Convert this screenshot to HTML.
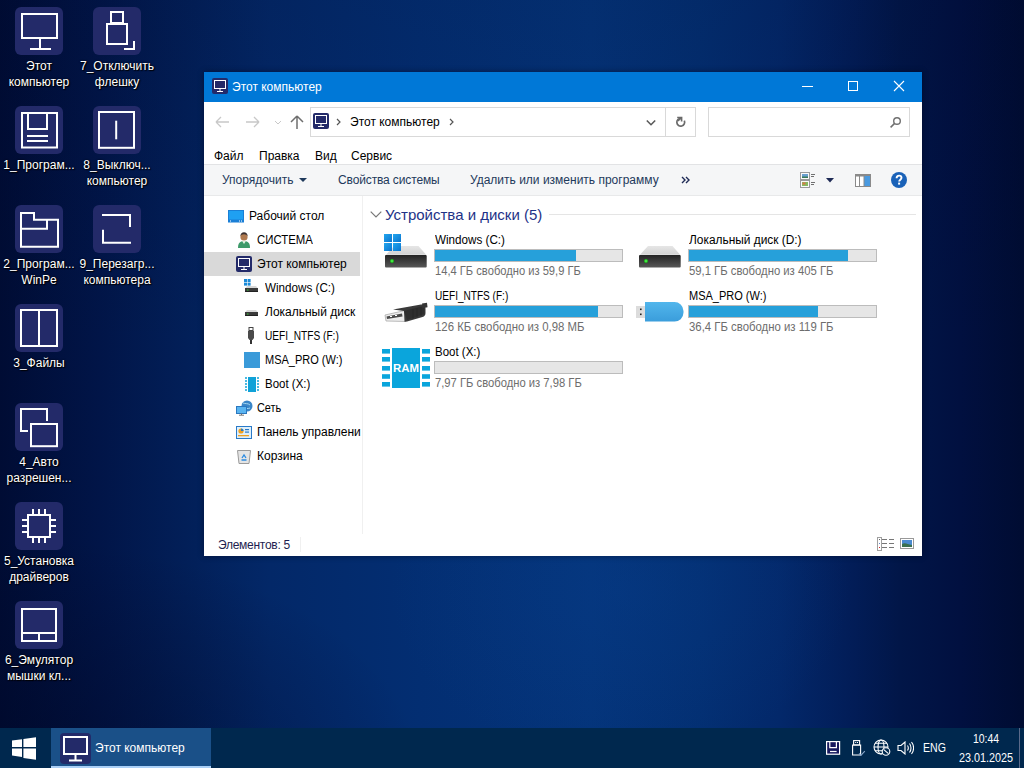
<!DOCTYPE html>
<html><head><meta charset="utf-8">
<style>
*{margin:0;padding:0;box-sizing:border-box}
html,body{width:1024px;height:768px;overflow:hidden}
body{position:relative;font-family:"Liberation Sans",sans-serif;
background:
 radial-gradient(ellipse 230px 170px at 620px 590px, rgba(8,62,140,0.35) 0%, rgba(8,62,140,0) 100%),
 radial-gradient(ellipse 420px 230px at 0px 768px, rgba(0,8,40,0.6) 0%, rgba(0,8,40,0) 100%),
 linear-gradient(180deg, rgba(0,8,40,0.12) 0px, rgba(0,8,40,0) 350px),
 linear-gradient(90deg,#000c34 0px,#011548 100px,#021f58 185px,#032868 270px,#032e72 420px,#04347a 590px,#032f72 700px,#03286a 780px,#021d58 850px,#011648 900px,#011040 960px,#000c32 1024px);
 background-color:#041c55;
}
.abs{position:absolute}
/* desktop icons */
.di{position:absolute;width:78px;text-align:center;color:#fff;font-size:12px;line-height:16px;text-shadow:0 0 2px #000,1px 1px 1px #000}
.di .ic{position:absolute;left:15px;top:0;width:48px;height:48px;border-radius:6px;background:#232a69}
.di .ic svg{position:absolute;left:0;top:0}
.di .lb{position:absolute;left:0;top:51px;width:78px}
/* window */
#win{position:absolute;left:204px;top:72px;width:718px;height:484px;background:#fff;box-shadow:0 0 6px rgba(0,0,20,0.45)}
#title{position:absolute;left:0;top:0;width:718px;height:30px;background:#0078d7;color:#fff;font-size:12px}
.t{position:absolute;white-space:nowrap;font-size:12px;line-height:14px}
#taskbar{position:absolute;left:0;top:728px;width:1024px;height:40px;background:#00284e}
</style></head><body>

<!-- desktop icons -->
<div class="di" style="left:0;top:7px"><div class="ic"><svg width="48" height="48" viewBox="0 0 48 48"><rect x="7" y="7" width="35" height="24" stroke="#fff" stroke-width="2" fill="none"/><path d="M25 31v10M15 42h21" stroke="#fff" stroke-width="2" fill="none"/></svg></div><div class="lb">Этот<br>компьютер</div></div>
<div class="di" style="left:78px;top:7px"><div class="ic"><svg width="48" height="48" viewBox="0 0 48 48"><rect x="18" y="5" width="12" height="11" stroke="#fff" stroke-width="2" fill="none"/><rect x="14" y="17" width="20" height="20" stroke="#fff" stroke-width="2" fill="none"/><path d="M41 34v8H31" stroke="#fff" stroke-width="2" fill="none"/></svg></div><div class="lb">7_Отключить<br>флешку</div></div>
<div class="di" style="left:0;top:106px"><div class="ic"><svg width="48" height="48" viewBox="0 0 48 48"><rect x="7" y="7" width="35" height="34.5" stroke="#fff" stroke-width="2" fill="none"/><path d="M13 7v16h19V7" stroke="#fff" stroke-width="2" fill="none"/><path d="M12 30h21M12 35h21" stroke="#fff" stroke-width="2" fill="none"/></svg></div><div class="lb">1_Програм...</div></div>
<div class="di" style="left:78px;top:106px"><div class="ic"><svg width="48" height="48" viewBox="0 0 48 48"><rect x="6" y="6" width="35" height="35.8" stroke="#fff" stroke-width="2" fill="none"/><path d="M23.2 14.7v18.6" stroke="#fff" stroke-width="2" fill="none"/></svg></div><div class="lb">8_Выключ...<br>компьютер</div></div>
<div class="di" style="left:0;top:205px"><div class="ic"><svg width="48" height="48" viewBox="0 0 48 48"><path d="M6 8h13v6.75h24v27.05H6z" stroke="#fff" stroke-width="2" fill="none"/><path d="M6 23.7h26v-8.95" stroke="#fff" stroke-width="2" fill="none"/></svg></div><div class="lb">2_Програм...<br>WinPe</div></div>
<div class="di" style="left:78px;top:205px"><div class="ic"><svg width="48" height="48" viewBox="0 0 48 48"><path d="M9 10h28v12M10 24.7V37.8h28" stroke="#fff" stroke-width="2" fill="none"/></svg></div><div class="lb">9_Перезагр...<br>компьютера</div></div>
<div class="di" style="left:0;top:304px"><div class="ic"><svg width="48" height="48" viewBox="0 0 48 48"><rect x="6" y="6" width="36" height="36" stroke="#fff" stroke-width="2" fill="none"/><path d="M24 6v36" stroke="#fff" stroke-width="2" fill="none"/></svg></div><div class="lb">3_Файлы</div></div>
<div class="di" style="left:0;top:403px"><div class="ic"><svg width="48" height="48" viewBox="0 0 48 48"><path d="M13 28H6V6h26v12" stroke="#fff" stroke-width="2" fill="none"/><rect x="16" y="21" width="26" height="22.2" stroke="#fff" stroke-width="2" fill="none"/></svg></div><div class="lb">4_Авто<br>разрешен...</div></div>
<div class="di" style="left:0;top:502px"><div class="ic"><svg width="48" height="48" viewBox="0 0 48 48"><rect x="13" y="13" width="22" height="22" stroke="#fff" stroke-width="2" fill="none"/><path d="M18 7v5M24 7v5M30 7v5M18 36v5M24 36v5M30 36v5M7 18h5M7 24h5M7 30h5M36 18h5M36 24h5M36 30h5" stroke="#fff" stroke-width="2" fill="none"/></svg></div><div class="lb">5_Установка<br>драйверов</div></div>
<div class="di" style="left:0;top:601px"><div class="ic"><svg width="48" height="48" viewBox="0 0 48 48"><rect x="7" y="8" width="34" height="32" stroke="#fff" stroke-width="2" fill="none"/><path d="M7 32h34M24 32v8" stroke="#fff" stroke-width="2" fill="none"/></svg></div><div class="lb">6_Эмулятор<br>мышки кл...</div></div>

<div id="win">
 <div id="title">
  <svg class="abs" style="left:8px;top:6px" width="16" height="16" viewBox="0 0 16 16"><rect x="0" y="0" width="16" height="16" rx="2" fill="#232a69"/><rect x="2.5" y="2.5" width="11" height="8" fill="none" stroke="#fff" stroke-width="1"/><path d="M8 11v2.5M5 13.5h6" stroke="#fff" stroke-width="1"/></svg>
  <div class="t" style="left:28px;top:8px;color:#fff">Этот компьютер</div>
  <div class="abs" style="left:598px;top:14px;width:11px;height:1px;background:#fff"></div>
  <div class="abs" style="left:644px;top:9px;width:10px;height:10px;border:1px solid #fff"></div>
  <svg class="abs" style="left:689px;top:8px" width="12" height="12" viewBox="0 0 12 12"><path d="M1 1L11 11M11 1L1 11" stroke="#fff" stroke-width="1.1"/></svg>
 </div>
 <!-- nav buttons -->
 <svg class="abs" style="left:10px;top:42px" width="100" height="16" viewBox="0 0 100 16">
  <path d="M2 8h13M2 8l5-5M2 8l5 5" stroke="#c8c8c8" stroke-width="1.3" fill="none"/>
  <path d="M32 8h13M45 8l-5-5M45 8l-5 5" stroke="#c8c8c8" stroke-width="1.3" fill="none"/>
  <path d="M61 7l3 3 3-3" stroke="#c8c8c8" stroke-width="1" fill="none"/>
  <path d="M83 15V2M83 2l-6 6M83 2l6 6" stroke="#6f6f6f" stroke-width="1.5" fill="none"/>
 </svg>
 <div class="abs" style="left:106px;top:35px;width:386px;height:30px;border:1px solid #d9d9d9"></div>
 <div class="abs" style="left:461px;top:36px;width:1px;height:28px;background:#d9d9d9"></div>
 <svg class="abs" style="left:109px;top:41px" width="16" height="16" viewBox="0 0 16 16"><rect x="0" y="0" width="16" height="16" rx="2" fill="#232a69"/><rect x="2.5" y="2.5" width="11" height="8" fill="none" stroke="#fff" stroke-width="1"/><path d="M8 11v2.5M5 13.5h6" stroke="#fff" stroke-width="1"/></svg>
 <svg class="abs" style="left:131px;top:45px" width="8" height="10" viewBox="0 0 8 10"><path d="M2 2l3 3-3 3" stroke="#555" stroke-width="1.2" fill="none"/></svg>
 <div class="t" style="left:146px;top:43px;color:#000">Этот компьютер</div>
 <svg class="abs" style="left:244px;top:45px" width="8" height="10" viewBox="0 0 8 10"><path d="M2 2l3 3-3 3" stroke="#555" stroke-width="1.2" fill="none"/></svg>
 <svg class="abs" style="left:441px;top:47px" width="12" height="8" viewBox="0 0 12 8"><path d="M1.8 1.5l4.2 4.2 4.2-4.2" stroke="#5a5a5a" stroke-width="1.6" fill="none"/></svg>
 <svg class="abs" style="left:470px;top:42px" width="14" height="16" viewBox="0 0 14 16"><path d="M10.3 6.6A3.9 3.9 0 1 1 6.9 4.3" stroke="#6a6a6a" stroke-width="1.7" fill="none"/><path d="M3.2 3.5H7.6V7.6" stroke="#6a6a6a" stroke-width="1.6" fill="none"/><path d="M4 7L7.4 3.7" stroke="#6a6a6a" stroke-width="1.3"/></svg>
 <div class="abs" style="left:504px;top:35px;width:202px;height:30px;border:1px solid #d9d9d9"></div>
 <svg class="abs" style="left:684px;top:42px" width="16" height="16" viewBox="0 0 16 16"><circle cx="9" cy="7" r="3.3" stroke="#707070" stroke-width="1.4" fill="none"/><path d="M6.6 9.4L2.6 13.4" stroke="#707070" stroke-width="1.5"/></svg>
 <!-- menu -->
 <div class="t" style="left:10px;top:77px;color:#000">Файл</div>
 <div class="t" style="left:55px;top:77px;color:#000">Правка</div>
 <div class="t" style="left:111px;top:77px;color:#000">Вид</div>
 <div class="t" style="left:147px;top:77px;color:#000">Сервис</div>
 <!-- toolbar -->
 <div class="abs" style="left:0;top:92px;width:718px;height:32px;background:#f5f6f7;border-top:1px solid #e2e3e5;border-bottom:1px solid #e8e9ea"></div>
 <div class="t" style="left:18px;top:101px;color:#1e395b">Упорядочить</div>
 <svg class="abs" style="left:95px;top:106px" width="9" height="5" viewBox="0 0 9 5"><path d="M0 0h8L4 4z" fill="#1e395b"/></svg>
 <div class="t" style="left:134px;top:101px;color:#1e395b;letter-spacing:-0.13px">Свойства системы</div>
 <div class="t" style="left:266px;top:101px;color:#1e395b">Удалить или изменить программу</div>
 <svg class="abs" style="left:477px;top:104px" width="10" height="8" viewBox="0 0 10 8"><path d="M1 1l3 3-3 3M5 1l3 3-3 3" stroke="#1e2a55" stroke-width="1.4" fill="none"/></svg>
 <svg class="abs" style="left:596px;top:100px" width="16" height="16" viewBox="0 0 16 16">
  <rect x="0.5" y="0.5" width="9" height="7" fill="#fafafa" stroke="#9a9a9a"/><rect x="0.5" y="8.5" width="9" height="7" fill="#fafafa" stroke="#9a9a9a"/>
  <rect x="2" y="2" width="6" height="4" fill="#6aa0d0"/><rect x="2" y="4.5" width="6" height="1.5" fill="#3a7a58"/>
  <rect x="2" y="10" width="6" height="4" fill="#88b860"/><rect x="2.5" y="10.5" width="3" height="2" fill="#d87848"/>
  <path d="M11 2.5h4M11 4.5h3M11 10.5h4M11 12.5h3" stroke="#707070" stroke-width="1"/>
 </svg>
 <svg class="abs" style="left:622px;top:106px" width="8" height="5" viewBox="0 0 8 5"><path d="M0 0h8L4 4.5z" fill="#1e2a55"/></svg>
 <svg class="abs" style="left:651px;top:102px" width="16" height="13" viewBox="0 0 16 13">
  <rect x="0.5" y="0.5" width="15" height="12" fill="#fff" stroke="#8a8a8a"/>
  <rect x="1" y="1" width="14" height="1.5" fill="#8a8a8a"/>
  <rect x="9" y="2" width="6" height="10" fill="#4a9ae0"/>
  <path d="M4.5 2v10M9 2v10" stroke="#8a8a8a" stroke-width="1"/>
 </svg>
 <svg class="abs" style="left:687px;top:100px" width="16" height="16" viewBox="0 0 16 16">
  <circle cx="8" cy="8" r="8" fill="#1a62b8"/>
  <path d="M5.6 6.2c0-1.6 1.1-2.6 2.5-2.6s2.4 0.9 2.4 2.2c0 1.9-2.3 1.9-2.3 3.8" stroke="#fff" stroke-width="1.9" fill="none"/>
  <rect x="7.1" y="10.6" width="2" height="2" fill="#fff"/>
 </svg>
 <!--NAV-->
 <div class="abs" style="left:0;top:180px;width:156px;height:24px;background:#d9d9d9"></div>
 <div class="abs" style="left:158px;top:124px;width:1px;height:338px;background:#f0f0f0"></div><div class="abs" style="left:96px;top:465px;width:1px;height:15px;background:#f0f0f0"></div>
 <svg class="abs" style="left:24px;top:138px" width="16" height="13" viewBox="0 0 16 13"><rect x="0.5" y="0.5" width="15" height="11.5" fill="#1fa0f2" stroke="#1a7fd6"/><rect x="0.5" y="9.5" width="15" height="2.5" fill="#1a7fd6"/><rect x="2" y="10.5" width="1" height="1" fill="#fff"/><rect x="11" y="10.5" width="1" height="1" fill="#fff"/><rect x="13" y="10.5" width="1" height="1" fill="#fff"/></svg>
 <div class="t" style="left:45px;top:137px;color:#000;">Рабочий стол</div>
 <svg class="abs" style="left:33px;top:159px" width="14" height="18" viewBox="0 0 14 18"><path d="M1 17c0-5 2-7 6-7s6 2 6 7z" fill="#3d9a6a"/><path d="M5 10l2 3 2-3z" fill="#e0f0e0"/><circle cx="7" cy="6" r="3.6" fill="#b07a50"/><path d="M3.3 5.5C3.5 2.5 5 1.2 7 1.2s3.6 1.3 3.7 4.3C10 4 9 3.2 7 3.2S4 4 3.3 5.5z" fill="#3a3030"/></svg>
 <div class="t" style="left:53px;top:161px;color:#000;transform:scaleX(0.949);transform-origin:0 0">СИСТЕМА</div>
 <svg class="abs" style="left:32px;top:184px" width="16" height="16" viewBox="0 0 16 16"><rect x="0" y="0" width="16" height="16" rx="2" fill="#232a69"/><rect x="2.5" y="2.5" width="11" height="8" fill="none" stroke="#fff" stroke-width="1"/><path d="M8 11v2.5M5 13.5h6" stroke="#fff" stroke-width="1"/></svg>
 <div class="t" style="left:53px;top:185px;color:#000;">Этот компьютер</div>
 <svg class="abs" style="left:40px;top:207px" width="16" height="14" viewBox="0 0 16 14"><rect x="0" y="0" width="3" height="3" fill="#1a8ad8"/><rect x="3.6" y="0" width="3" height="3" fill="#1a8ad8"/><rect x="0" y="3.6" width="3" height="3" fill="#1a8ad8"/><rect x="3.6" y="3.6" width="3" height="3" fill="#1a8ad8"/><path d="M1 9.5L3 7h9l2 2.5z" fill="#d8d8d8"/><rect x="1" y="9" width="13" height="4" fill="#3a3a3a"/><rect x="1" y="12" width="13" height="1" fill="#222"/><rect x="3" y="10.5" width="1.5" height="1" fill="#3c3"/></svg>
 <div class="t" style="left:61px;top:209px;color:#000;transform:scaleX(0.972);transform-origin:0 0">Windows (C:)</div>
 <svg class="abs" style="left:40px;top:231px" width="16" height="14" viewBox="0 0 16 14"><path d="M1 9.5L3 7h9l2 2.5z" fill="#d8d8d8"/><rect x="1" y="9" width="13" height="4" fill="#3a3a3a"/><rect x="1" y="12" width="13" height="1" fill="#222"/><rect x="3" y="10.5" width="1.5" height="1" fill="#3c3"/></svg>
 <div class="t" style="left:61px;top:233px;color:#000;">Локальный диск</div>
 <svg class="abs" style="left:42px;top:255px" width="12" height="17" viewBox="0 0 12 17"><rect x="3" y="0.5" width="4" height="3" fill="none" stroke="#444" stroke-width="1"/><path d="M2 4h6v7l-1.5 2h-3L2 11z" fill="#4a4a4a"/><rect x="4" y="13" width="2" height="4" fill="#333"/></svg>
 <div class="t" style="left:61px;top:257px;color:#000;transform:scaleX(0.845);transform-origin:0 0">UEFI_NTFS (F:)</div>
 <svg class="abs" style="left:40px;top:280px" width="16" height="16" viewBox="0 0 16 16"><rect x="0" y="0" width="16" height="16" fill="#3a9ad9"/></svg>
 <div class="t" style="left:61px;top:281px;color:#000;transform:scaleX(0.917);transform-origin:0 0">MSA_PRO (W:)</div>
 <svg class="abs" style="left:40px;top:305px" width="16" height="15" viewBox="0 0 16 15"><rect x="4" y="0" width="8" height="15" fill="#10a2d8"/><path d="M1 1h2M1 4h2M1 7h2M1 10h2M1 13h2M13 1h2M13 4h2M13 7h2M13 10h2M13 13h2" stroke="#10a2d8" stroke-width="1.6"/></svg>
 <div class="t" style="left:61px;top:305px;color:#000;transform:scaleX(0.957);transform-origin:0 0">Boot (X:)</div>
 <svg class="abs" style="left:32px;top:328px" width="17" height="16" viewBox="0 0 17 16"><circle cx="11" cy="6" r="5.5" fill="#3a86c8"/><path d="M7 3c2 1 5 0 7 2M8 9c2-1 4 0 6-1" stroke="#a8d8f0" stroke-width="1" fill="none"/><rect x="0.5" y="6.5" width="10" height="7" fill="#5ab4f0" stroke="#2a78c0"/><path d="M5.5 13.5v1.5M3 15.2h5" stroke="#777" stroke-width="1"/></svg>
 <div class="t" style="left:53px;top:329px;color:#000;transform:scaleX(0.907);transform-origin:0 0">Сеть</div>
 <svg class="abs" style="left:32px;top:354px" width="16" height="13" viewBox="0 0 16 13"><rect x="0.5" y="0.5" width="15" height="12" fill="#dff0fb" stroke="#2a7ac8"/><circle cx="5" cy="5" r="2.6" fill="#f0a020"/><path d="M5 5V2.4A2.6 2.6 0 0 1 7.6 5z" fill="#2a7ac8"/><rect x="9" y="3" width="4" height="1.2" fill="#2a7ac8"/><rect x="9" y="5.5" width="4" height="1.2" fill="#2a7ac8"/><rect x="2" y="9" width="11" height="1.3" fill="#f0a020"/></svg>
 <div class="t" style="left:53px;top:353px;color:#000;">Панель управлени</div>
 <svg class="abs" style="left:33px;top:377px" width="14" height="15" viewBox="0 0 14 15"><path d="M0.5 1.5h13l-1.5 13h-10z" fill="#e4e4e4" stroke="#9a9a9a"/><path d="M5 9l2-3 2 3M4.5 11h5" stroke="#2a8ae0" stroke-width="1.3" fill="none"/></svg>
 <div class="t" style="left:53px;top:377px;color:#000;">Корзина</div>
 <!--/NAV-->
 <!--CONTENT-->
 <svg width="0" height="0" style="position:absolute"><defs>
<linearGradient id="gfront" x1="0" y1="0" x2="0" y2="1"><stop offset="0" stop-color="#232323"/><stop offset="1" stop-color="#585858"/></linearGradient>
<linearGradient id="gtop" x1="0" y1="0" x2="0" y2="1"><stop offset="0" stop-color="#e6e6e6"/><stop offset="1" stop-color="#d2d2d2"/></linearGradient>
<linearGradient id="gwin" x1="0" y1="0" x2="1" y2="1"><stop offset="0" stop-color="#22a6ee"/><stop offset="1" stop-color="#0a74cf"/></linearGradient>
<linearGradient id="gflash" x1="0" y1="0" x2="0" y2="1"><stop offset="0" stop-color="#52b6ec"/><stop offset="1" stop-color="#3a9ddb"/></linearGradient>
<radialGradient id="gled"><stop offset="0" stop-color="#60ff60"/><stop offset="1" stop-color="#10b010"/></radialGradient>
</defs></svg>
 <svg class="abs" style="left:166px;top:139px" width="12" height="8" viewBox="0 0 12 8"><path d="M0.7 0.7l5.3 5.3 5.3-5.3" stroke="#777" stroke-width="1.2" fill="none"/></svg>
 <div class="t" style="left:181px;top:134px;color:#1e3287;font-size:15px;line-height:17px">Устройства и диски (5)</div>
 <div class="abs" style="left:345px;top:142px;width:367px;height:1px;background:#e5e5e5"></div>
 <svg class="abs" style="left:174px;top:156px" width="56" height="44" viewBox="0 0 56 44"><g transform="translate(0,0)"><path d="M8 26.8L16 18h24.5l7.7 8.8z" fill="url(#gtop)"/><rect x="7" y="27" width="41.7" height="12.5" rx="1" fill="url(#gfront)"/><circle cx="14" cy="33" r="2" fill="url(#gled)"/></g><rect x="6" y="6" width="8" height="8" fill="url(#gwin)"/><rect x="15" y="6" width="8" height="8" fill="url(#gwin)"/><rect x="6" y="15" width="8" height="8" fill="url(#gwin)"/><rect x="15" y="15" width="8" height="8" fill="url(#gwin)"/></svg>
 <div class="t" style="left:231px;top:161px;color:#000;transform:scaleX(0.972);transform-origin:0 0">Windows (C:)</div>
 <div class="abs" style="left:230px;top:177px;width:189px;height:13px;border:1px solid #bcbcbc;background:#e6e6e6"><div style="width:141px;height:11px;background:#26a0da"></div></div>
 <div class="t" style="left:231px;top:192px;color:#6d6d6d;transform:scaleX(0.930);transform-origin:0 0">14,4 ГБ свободно из 59,9 ГБ</div>
 <svg class="abs" style="left:428px;top:156px" width="56" height="44" viewBox="0 0 56 44"><path d="M8 26.8L16 18h24.5l7.7 8.8z" fill="url(#gtop)"/><rect x="7" y="27" width="41.7" height="12.5" rx="1" fill="url(#gfront)"/><circle cx="14" cy="33" r="2" fill="url(#gled)"/></svg>
 <div class="t" style="left:485px;top:161px;color:#000;transform:scaleX(0.991);transform-origin:0 0">Локальный диск (D:)</div>
 <div class="abs" style="left:484px;top:177px;width:189px;height:13px;border:1px solid #bcbcbc;background:#e6e6e6"><div style="width:159px;height:11px;background:#26a0da"></div></div>
 <div class="t" style="left:485px;top:192px;color:#6d6d6d;transform:scaleX(0.941);transform-origin:0 0">59,1 ГБ свободно из 405 ГБ</div>
 <svg class="abs" style="left:174px;top:218px" width="56" height="44" viewBox="0 0 56 44"><path d="M7 25L27 20.5 28 31.5 8 31z" fill="#ececec" stroke="#a0a0a0" stroke-width="0.7"/><path d="M8.5 26.5L24 23.5 24.5 26.5 9 29z" fill="#4a4a4a"/><rect x="12" y="26" width="2" height="1" fill="#fff"/><rect x="17" y="25" width="2" height="1" fill="#fff"/><path d="M15 19.5L43 14.5Q47 14 47.5 18.5L47.5 23Q47.5 26 44.5 27L29 31.5 26.5 31.8 26 21z" fill="#3a3a3a"/><path d="M26 21L43 16.5Q46.5 16.5 46.5 20L46.5 24 29 30z" fill="#2e2e2e"/><path d="M35 19v10M39 18v9.5M43 17v9" stroke="#262626" stroke-width="0.8"/><path d="M44 13.5l5-0.8 0.5 4.6-5 1z" fill="#353535"/></svg>
 <div class="t" style="left:231px;top:217px;color:#000;transform:scaleX(0.839);transform-origin:0 0">UEFI_NTFS (F:)</div>
 <div class="abs" style="left:230px;top:233px;width:189px;height:13px;border:1px solid #bcbcbc;background:#e6e6e6"><div style="width:163px;height:11px;background:#26a0da"></div></div>
 <div class="t" style="left:231px;top:248px;color:#6d6d6d;transform:scaleX(0.949);transform-origin:0 0">126 КБ свободно из 0,98 МБ</div>
 <svg class="abs" style="left:426px;top:218px" width="56" height="44" viewBox="0 0 56 44"><rect x="6" y="16" width="9" height="12" fill="#dcdcdc"/><rect x="10" y="18.5" width="1.6" height="1.6" fill="#222"/><rect x="10" y="23.5" width="1.6" height="1.6" fill="#222"/><path d="M15 12H44A9 9 0 0 1 53.5 21V22.6A9 9 0 0 1 44 31.6H15z" fill="url(#gflash)"/></svg>
 <div class="t" style="left:485px;top:217px;color:#000;transform:scaleX(0.917);transform-origin:0 0">MSA_PRO (W:)</div>
 <div class="abs" style="left:484px;top:233px;width:189px;height:13px;border:1px solid #bcbcbc;background:#e6e6e6"><div style="width:129px;height:11px;background:#26a0da"></div></div>
 <div class="t" style="left:485px;top:248px;color:#6d6d6d;transform:scaleX(0.947);transform-origin:0 0">36,4 ГБ свободно из 119 ГБ</div>
 <svg class="abs" style="left:172px;top:270px" width="60" height="52" viewBox="0 0 60 52"><rect x="16" y="6" width="28" height="40" fill="#0aa5dc"/><rect x="6" y="7" width="8" height="4.6" fill="#0aa5dc"/><rect x="46" y="7" width="8" height="4.6" fill="#0aa5dc"/><rect x="6" y="15" width="8" height="4.6" fill="#0aa5dc"/><rect x="46" y="15" width="8" height="4.6" fill="#0aa5dc"/><rect x="6" y="24" width="8" height="4.6" fill="#0aa5dc"/><rect x="46" y="24" width="8" height="4.6" fill="#0aa5dc"/><rect x="6" y="32.2" width="8" height="4.6" fill="#0aa5dc"/><rect x="46" y="32.2" width="8" height="4.6" fill="#0aa5dc"/><rect x="6" y="40" width="8" height="4.6" fill="#0aa5dc"/><rect x="46" y="40" width="8" height="4.6" fill="#0aa5dc"/><text x="30" y="30" text-anchor="middle" font-family="Liberation Sans" font-weight="bold" font-size="11" fill="#fff" textLength="26" lengthAdjust="spacingAndGlyphs">RAM</text></svg>
 <div class="t" style="left:231px;top:273px;color:#000;transform:scaleX(0.957);transform-origin:0 0">Boot (X:)</div>
 <div class="abs" style="left:230px;top:289px;width:189px;height:13px;border:1px solid #bcbcbc;background:#e6e6e6"></div>
 <div class="t" style="left:231px;top:304px;color:#6d6d6d;transform:scaleX(0.936);transform-origin:0 0">7,97 ГБ свободно из 7,98 ГБ</div>
 <div class="t" style="left:14px;top:466px;color:#1e1e50;letter-spacing:-0.27px">Элементов: 5</div>
 <svg class="abs" style="left:673px;top:465px" width="17" height="14" viewBox="0 0 17 14"><rect x="0.5" y="0.5" width="4" height="13" fill="none" stroke="#a0a0a0"/><path d="M5 2.5h5M12 2.5h5M5 6.5h5M12 6.5h5M5 10.5h5M12 10.5h5" stroke="#777" stroke-width="1"/><rect x="2" y="2" width="1" height="1" fill="#666"/><rect x="2" y="6" width="1" height="1" fill="#68c"/><rect x="2" y="10" width="1" height="1" fill="#d22"/></svg>
 <svg class="abs" style="left:696px;top:466px" width="14" height="11" viewBox="0 0 14 11"><rect x="0.5" y="0.5" width="13" height="10" fill="#fff" stroke="#999"/><rect x="2" y="2" width="10" height="7" fill="#4a8ad0"/><path d="M2 6c3-2 5 0 10 1v2H2z" fill="#3a7050"/></svg>
 <!--/CONTENT-->
</div>

<div id="taskbar">
 <svg class="abs" style="left:11px;top:8px" width="26" height="25" viewBox="0 0 26 25"><path d="M1 4.6L11 3.2V11H1z M12.4 3L25 1.2V11H12.4z M1 12.5H11v8.4L1 19.5z M12.4 12.5H25v11.3L12.4 22z" fill="#fff"/></svg>
 <div class="abs" style="left:51px;top:0;width:160px;height:40px;background:#1a5088"></div>
 <div class="abs" style="left:51px;top:38px;width:160px;height:2px;background:#aacff6"></div>
 <svg class="abs" style="left:60px;top:5px" width="31" height="31" viewBox="0 0 31 31"><rect x="0" y="0" width="31" height="31" rx="4" fill="#232a69"/><rect x="4" y="4" width="23" height="17" fill="none" stroke="#fff" stroke-width="2"/><path d="M15.5 21v6M9 27.5h13" stroke="#fff" stroke-width="2"/></svg>
 <div class="t" style="left:95px;top:13px;color:#fff">Этот компьютер</div>
 <svg class="abs" style="left:825px;top:12px" width="16" height="15" viewBox="0 0 16 15"><rect x="1.6" y="1.6" width="13" height="12.6" fill="#16185e" stroke="#fff" stroke-width="1.2"/><path d="M4.8 1.6v6h6.6v-6" fill="none" stroke="#fff" stroke-width="1.2"/><path d="M5 11.5h6.6" stroke="#fff" stroke-width="1.2"/></svg>
 <svg class="abs" style="left:851px;top:11px" width="15" height="17" viewBox="0 0 15 17"><rect x="2.6" y="1.6" width="6" height="4.4" fill="none" stroke="#fff" stroke-width="1.1"/><rect x="4.2" y="3" width="1" height="1" fill="#fff"/><rect x="6" y="3" width="1" height="1" fill="#fff"/><path d="M1.6 6h8v10H1.6z" fill="none" stroke="#fff" stroke-width="1.1"/><path d="M8 14.5l2 1.8 3.8-4.2" fill="none" stroke="#8aa8cc" stroke-width="1.1"/></svg>
 <svg class="abs" style="left:873px;top:11px" width="18" height="17" viewBox="0 0 18 17"><circle cx="8" cy="8" r="7" fill="none" stroke="#fff" stroke-width="1.1"/><ellipse cx="8" cy="8" rx="3" ry="7" fill="none" stroke="#fff" stroke-width="1.1"/><path d="M1 8h14M2.2 4.3h11.6M2.2 11.7h8" stroke="#fff" stroke-width="1.1"/><circle cx="13" cy="12.5" r="3.8" fill="#00284e" stroke="#fff" stroke-width="1.1"/><path d="M10.5 10.3l5 4.4" stroke="#fff" stroke-width="1.1"/></svg>
 <svg class="abs" style="left:897px;top:13px" width="17" height="14" viewBox="0 0 17 14"><path d="M1 4.5h3l4-3.5v12L4 9.5H1z" fill="none" stroke="#fff" stroke-width="1.1"/><path d="M10.5 4.5c1 1.5 1 3.5 0 5M12.5 2.5c2 2.5 2 6.5 0 9M14.5 1c2.8 3.5 2.8 8.5 0 12" fill="none" stroke="#fff" stroke-width="1.1"/></svg>
 <div class="t" style="left:923px;top:13px;color:#fff;transform:scaleX(0.88);transform-origin:0 0">ENG</div>
 <div class="t" style="left:973px;top:4px;color:#fff;transform:scaleX(0.87);transform-origin:0 0">10:44</div>
 <div class="t" style="left:959px;top:23px;color:#fff;transform:scaleX(0.9);transform-origin:0 0">23.01.2025</div>
 <div class="abs" style="left:1019px;top:0;width:1px;height:40px;background:#5a6a8a"></div>
</div>
</body></html>
